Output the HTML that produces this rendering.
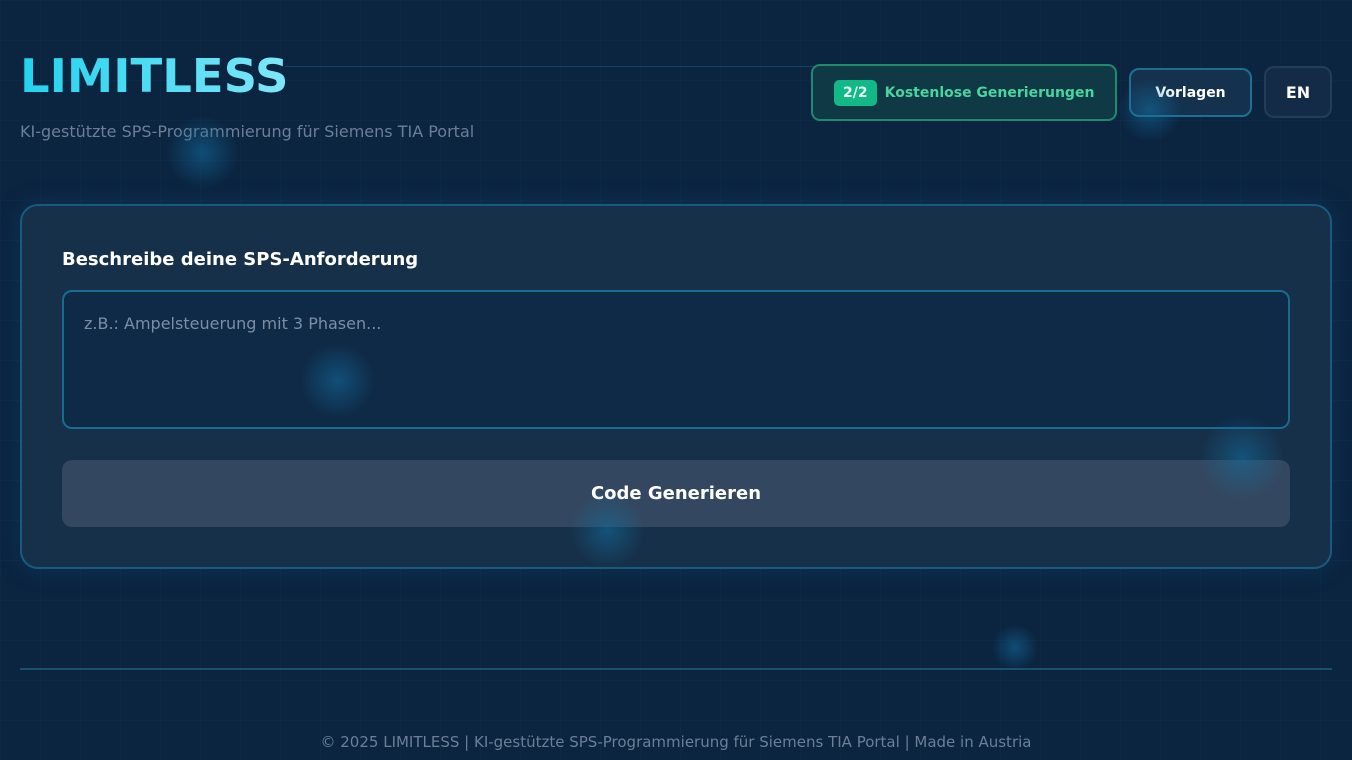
<!DOCTYPE html>
<html><head><meta charset="utf-8"><style>
*{box-sizing:border-box;margin:0;padding:0}
html,body{width:1352px;height:760px;overflow:hidden}
body{font-family:"DejaVu Sans","Liberation Sans",sans-serif;background:#0b2440;position:relative;
background-image:linear-gradient(rgba(40,120,170,.06) 1px,transparent 1px),linear-gradient(90deg,rgba(40,120,170,.06) 1px,transparent 1px);background-size:40px 40px}
.glow{position:absolute;border-radius:50%;background:radial-gradient(circle,rgba(20,110,160,.55),rgba(20,110,160,0) 70%);z-index:5}
h1{position:absolute;left:20px;top:49px;font-size:46.5px;font-weight:bold;
background:linear-gradient(90deg,#22d3ee,#7ee7f8);-webkit-background-clip:text;background-clip:text;color:transparent}
.sub{position:absolute;left:20px;top:122px;font-size:16px;color:#6b7f98}
.hline{position:absolute;left:285px;top:66px;width:820px;height:1px;background:rgba(40,140,190,.3)}
.badge{position:absolute;left:811px;top:64px;width:306px;height:57px;border:2px solid #1e8a70;border-radius:9px;background:#0f3a45;display:flex;align-items:center;padding-left:21px;font-size:14px;font-weight:bold;color:#4ad4a0}
.badge span{background:#12b886;color:#e8fff6;border-radius:5px;padding:5px 9px;margin-right:8px}
.btn{position:absolute;border-radius:10px;font-size:14px;font-weight:bold;color:#fff;display:flex;align-items:center;justify-content:center}
.vor{left:1129px;top:68px;width:123px;height:49px;border:2px solid #1f6f95;background:#14314e}
.en{left:1264px;top:66px;width:68px;height:52px;border:2px solid #223d5a;background:#132b47;font-size:16px}
.card{position:absolute;left:20px;top:204px;width:1312px;height:365px;border:2px solid #1a5a80;border-radius:18px;background:#163049;box-shadow:0 0 24px rgba(20,100,150,.25)}
.lbl{position:absolute;left:62px;top:249px;font-size:18px;font-weight:bold;color:#fff}
.ta{position:absolute;left:62px;top:290px;width:1228px;height:139px;border:2px solid #1a6a92;border-radius:10px;background:#0f2a47;padding:22px 20px;font-size:16px;color:#7c8ea4}
.gen{position:absolute;left:62px;top:460px;width:1228px;height:67px;border-radius:10px;background:#334860;color:#fff;font-size:18px;font-weight:bold;display:flex;align-items:center;justify-content:center}
.fl{position:absolute;left:20px;top:668px;width:1312px;height:2px;background:#1a4f70}
.foot{position:absolute;left:0;width:1352px;top:733px;text-align:center;font-size:15px;color:#6b7f98}
</style></head><body>
<div class="hline"></div>
<h1>LIMITLESS</h1>
<div class="sub">KI-gestützte SPS-Programmierung für Siemens TIA Portal</div>
<div class="badge"><span>2/2</span>Kostenlose Generierungen</div>
<div class="btn vor">Vorlagen</div>
<div class="btn en">EN</div>
<div class="card"></div>
<div class="lbl">Beschreibe deine SPS-Anforderung</div>
<div class="ta">z.B.: Ampelsteuerung mit 3 Phasen...</div>
<div class="gen">Code Generieren</div>
<div class="fl"></div>
<div class="foot">© 2025 LIMITLESS | KI-gestützte SPS-Programmierung für Siemens TIA Portal | Made in Austria</div>
<div class="glow" style="left:165px;top:115px;width:75px;height:75px"></div>
<div class="glow" style="left:300px;top:343px;width:75px;height:75px"></div>
<div class="glow" style="left:570px;top:493px;width:75px;height:75px"></div>
<div class="glow" style="left:1200px;top:415px;width:85px;height:85px"></div>
<div class="glow" style="left:990px;top:625px;width:50px;height:45px"></div>
<div class="glow" style="left:1115px;top:80px;width:70px;height:60px"></div>
</body></html>
